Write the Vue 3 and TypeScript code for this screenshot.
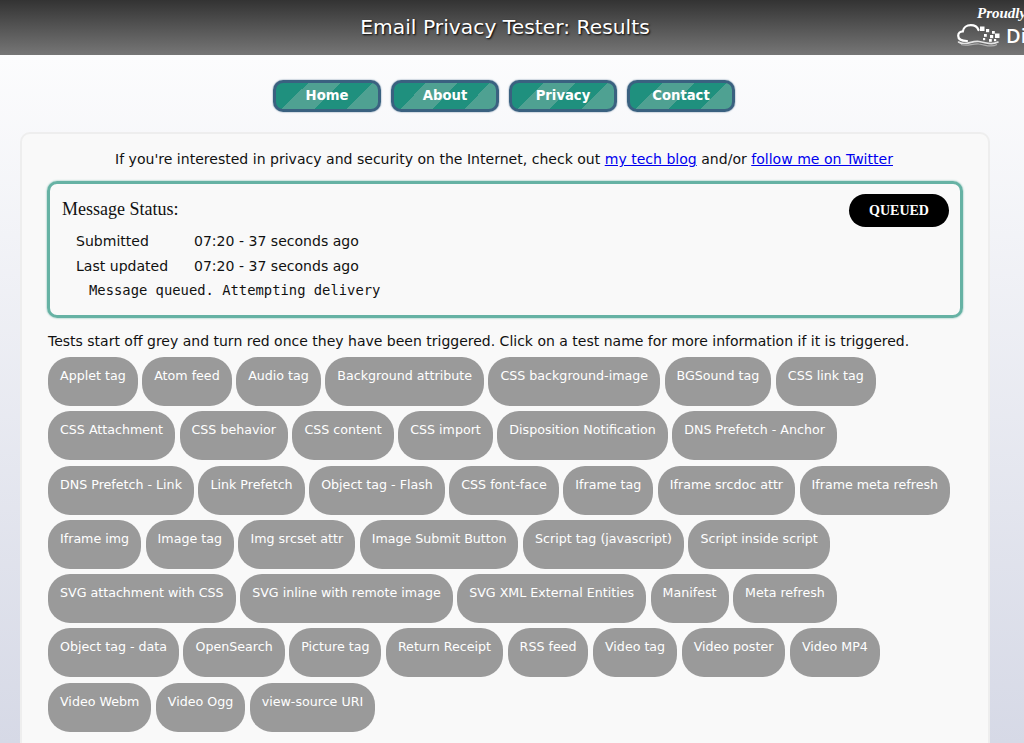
<script setup lang="ts">
const navItems: string[] = ['Home', 'About', 'Privacy', 'Contact']
const tests: string[][] = [
  ['Applet tag', 'Atom feed', 'Audio tag', 'Background attribute', 'CSS background-image', 'BGSound tag', 'CSS link tag'],
  ['CSS Attachment', 'CSS behavior', 'CSS content', 'CSS import', 'Disposition Notification', 'DNS Prefetch - Anchor'],
  ['DNS Prefetch - Link', 'Link Prefetch', 'Object tag - Flash', 'CSS font-face', 'Iframe tag', 'Iframe srcdoc attr', 'Iframe meta refresh'],
  ['Iframe img', 'Image tag', 'Img srcset attr', 'Image Submit Button', 'Script tag (javascript)', 'Script inside script'],
  ['SVG attachment with CSS', 'SVG inline with remote image', 'SVG XML External Entities', 'Manifest', 'Meta refresh'],
  ['Object tag - data', 'OpenSearch', 'Picture tag', 'Return Receipt', 'RSS feed', 'Video tag', 'Video poster', 'Video MP4'],
  ['Video Webm', 'Video Ogg', 'view-source URI'],
]
</script>

<template>
  <div class="page">
    <header class="top">
      <h1 class="title">Email Privacy Tester: Results</h1>
      <div class="sponsor">
        <div class="proudly">Proudly</div>
        <div class="brand">
          <svg class="cloud" width="43" height="24" viewBox="0 0 43 24" fill="none">
            <path d="M10 17C4.500 17 1.200 15 1.200 11.800C1.200 9.200 3.200 7.400 5.800 7.400C6.300 3.500 9.800 1.200 13.800 1.200C17.300 1.200 20.300 3 21.500 6" stroke="#fff" stroke-width="2.200" stroke-linecap="round"/>
            <path d="M1.500 18C8 22.500 14 16.500 22 17.500C30 18.500 34 21.500 41 18" stroke="#e4e4e4" stroke-width="1.600" stroke-linecap="round"/>
            <path d="M4 20.500C10 23 16 19 22 20C29 21 34 24 40 20.500" stroke="#b0b0b0" stroke-width="1.200"/>
            <g fill="#fff">
              <rect x="23" y="2.500" width="4.500" height="4.500"/>
              <rect x="29" y="5" width="3.200" height="3.200"/>
              <rect x="35" y="7" width="2.800" height="2.800"/>
              <rect x="38" y="9.500" width="4.500" height="4.500"/>
              <rect x="33" y="11" width="3.200" height="3.200"/>
              <rect x="27" y="10" width="2.800" height="2.800"/>
              <rect x="32" y="15" width="2.800" height="2.800"/>
              <rect x="37" y="15" width="2.200" height="2.200"/>
              <rect x="26" y="14" width="2.200" height="2.200"/>
            </g>
          </svg>
          <span class="brand-text">DigitalOcean</span>
        </div>
      </div>
    </header>

    <nav class="nav">
      <a v-for="item in navItems" :key="item" class="nav-btn">{{ item }}</a>
    </nav>

    <main class="card">
      <p class="intro">
        If you're interested in privacy and security on the Internet, check out
        <a class="link">my tech blog</a> and/or <a class="link">follow me on Twitter</a>
      </p>

      <section class="status">
        <div class="status-head">
          <h2 class="status-title">Message Status:</h2>
          <span class="badge">QUEUED</span>
        </div>
        <div class="status-row"><span class="status-key">Submitted</span><span>07:20 - 37 seconds ago</span></div>
        <div class="status-row"><span class="status-key">Last updated</span><span>07:20 - 37 seconds ago</span></div>
        <pre class="status-msg">Message queued. Attempting delivery</pre>
      </section>

      <p class="hint">Tests start off grey and turn red once they have been triggered. Click on a test name for more information if it is triggered.</p>

      <div class="tests">
        <div v-for="(row, i) in tests" :key="i" class="test-row">
          <span v-for="t in row" :key="t" class="pill">{{ t }}</span>
        </div>
      </div>
    </main>
  </div>
</template>

<style>
html, body { margin: 0; height: 100%; overflow: hidden; }
</style>

<style scoped>
.page {
  height: 743px;
  overflow: hidden;
  background: linear-gradient(#ffffff 0%, #d6d9e6 100%);
  font-family: "DejaVu Sans", Verdana, sans-serif;
  font-size: 14.05px;
  color: #111;
}
.top {
  height: 55px;
  background: linear-gradient(#333333, #767676);
  padding-right: 14px;
  display: flex;
  align-items: center;
  justify-content: center;
  position: relative;
  overflow: hidden;
}
.title {
  margin: 0 0 2px;
  font-size: 20.3px;
  font-weight: 400;
  color: #fff;
  text-shadow: 1px 1px 2px #000;
}
.sponsor {
  position: absolute;
  left: 957px;
  top: 5px;
  width: 140px;
  color: #fff;
}
.proudly {
  font-family: "Liberation Serif", serif;
  font-style: italic;
  font-weight: 700;
  font-size: 15px;
  line-height: 16px;
  margin-left: 20px;
}
.brand { display: flex; align-items: center; gap: 6px; margin-top: 1px; }
.cloud { flex: none; }
.brand-text { font-size: 20px; font-weight: 600; font-family: "Open Sans", sans-serif; }
.nav {
  display: flex;
  justify-content: center;
  gap: 10px;
  margin-top: 25px;
  padding-right: 16px;
}
.nav-btn {
  box-sizing: border-box;
  width: 108px;
  height: 32px;
  border: 3px solid #3a6180;
  border-radius: 10px;
  box-shadow: 0 0 1.5px #3a6180;
  background: linear-gradient(135deg, #1f907e 25%, #4fa192 25%, #4fa192 50%, #1f907e 50%, #1f907e 75%, #4fa192 75%);
  color: #fff;
  font-weight: 700;
  font-size: 13.2px;
  line-height: 26px;
  text-align: center;
}
.card {
  margin: 20px 34px 0 20px;
  box-sizing: border-box;
  height: 640px;
  background: #f9f9f9;
  border: 2px solid #eeeeee;
  border-radius: 10px;
  padding: 15px 25px 0;
}
.intro { margin: 0 2px 0 0; text-align: center; line-height: 20px; }
.link { color: #0000ee; text-decoration: underline; }
.status {
  box-sizing: border-box;
  height: 137px;
  margin-top: 12px;
  border: 3px solid #66b2a4;
  border-radius: 10px;
  box-shadow: 0 0 2px #66b2a4;
  padding: 10px 11px 0 12px;
}
.status-head { display: flex; justify-content: space-between; align-items: flex-start; margin-bottom: 2px; }
.status-title {
  margin: 4px 0 0;
  font-family: "Liberation Serif", serif;
  font-size: 18px;
  font-weight: 400;
  line-height: 22px;
}
.badge {
  box-sizing: border-box;
  width: 100px;
  height: 33px;
  border-radius: 17px;
  background: #000;
  color: #fff;
  font-family: "Liberation Serif", serif;
  font-weight: 700;
  font-size: 14px;
  line-height: 34px;
  text-align: center;
}
.status-row { display: flex; margin-left: 14px; line-height: 25px; }
.status-key { width: 118px; }
.status-msg {
  margin: 0 0 0 27px;
  font-family: "DejaVu Sans Mono", monospace;
  font-size: 13.83px;
  line-height: 22px;
}
.hint { margin: 13px 0 0 1px; font-size: 14px; line-height: 20px; white-space: nowrap; }
.tests { margin: 6px 0 0 1px; display: flex; flex-direction: column; gap: 5.3px; }
.test-row { display: flex; gap: 4.5px; }
.pill {
  box-sizing: border-box;
  height: 49px;
  padding: 10px 12px 0;
  border-radius: 22px;
  background: #9a9a9a;
  color: #fff;
  font-size: 12.65px;
  line-height: 18px;
  white-space: nowrap;
}
</style>
